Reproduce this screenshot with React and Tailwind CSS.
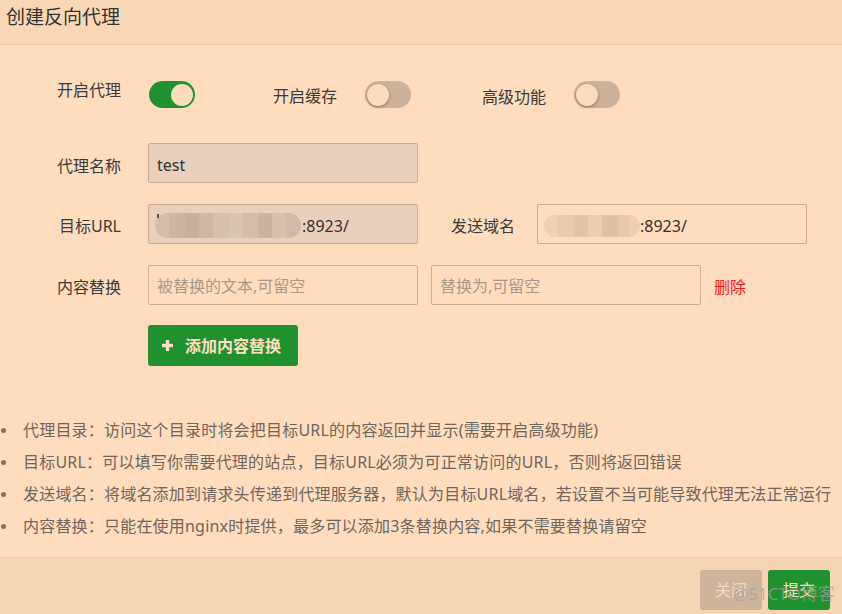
import React from "react";

function Toggle({ on }) {
  return (
    <div
      className={
        "relative w-[46px] h-[27px] rounded-full shrink-0 " +
        (on ? "bg-[#20912f]" : "bg-[#ccb29a]")
      }
    >
      <div
        className={
          "absolute top-[2.5px] w-[22px] h-[22px] rounded-full bg-[#fddcbd] " +
          (on ? "left-[22px]" : "left-[2px] shadow-[0_1px_3px_rgba(80,50,20,0.55)]")
        }
      />
    </div>
  );
}

function Blur1() {
  const blocks = [
    ["#d3bdab", 14],
    ["#cdb5a2", 16],
    ["#c9b09c", 14],
    ["#cfb7a4", 14],
    ["#d6c0ae", 16],
    ["#dac5b4", 14],
    ["#d3bcaa", 16],
    ["#ccb39f", 14],
    ["#d6c0ae", 14],
    ["#d1baa7", 15],
  ];
  return (
    <div className="relative flex h-[25px] w-[146px] rounded-full overflow-hidden blur-[0.6px]">
      {blocks.map(([c, w], i) => (
        <div key={i} style={{ background: c, width: w }} className="h-full" />
      ))}
    </div>
  );
}

function Blur2() {
  const blocks = [
    ["#efd1b5", 14],
    ["#e9caae", 16],
    ["#e4c4a7", 14],
    ["#edcdb1", 14],
    ["#e1c1a4", 16],
    ["#e8c8ac", 12],
    ["#eecfb3", 10],
  ];
  return (
    <div className="flex h-[22px] w-[96px] rounded-full overflow-hidden blur-[0.6px]">
      {blocks.map(([c, w], i) => (
        <div key={i} style={{ background: c, width: w }} className="h-full" />
      ))}
    </div>
  );
}

export default function App() {
  const tips = [
    "代理目录：访问这个目录时将会把目标URL的内容返回并显示(需要开启高级功能)",
    "目标URL：可以填写你需要代理的站点，目标URL必须为可正常访问的URL，否则将返回错误",
    "发送域名：将域名添加到请求头传递到代理服务器，默认为目标URL域名，若设置不当可能导致代理无法正常运行",
    "内容替换：只能在使用nginx时提供，最多可以添加3条替换内容,如果不需要替换请留空",
  ];
  return (
    <div className="relative w-[842px] h-[614px] overflow-hidden flex flex-col bg-[#fedcbd] font-['Noto_Sans','Noto_Sans_CJK_SC',sans-serif] text-[#333]">
      {/* header */}
      <div className="h-[45px] shrink-0 bg-[#f9d7b6] border-b border-[#ecc9a8] pl-[6px] pt-[6px]">
        <div className="text-[19px] leading-[22px] text-[#333]">创建反向代理</div>
      </div>

      {/* body */}
      <div className="flex-1 pt-[36px]">
        {/* toggles */}
        <div className="flex items-start h-[27px]">
          <div className="w-[121px] text-right text-[16px] leading-[18px] text-[#3a3a3a]">开启代理</div>
          <div className="ml-[28px]">
            <Toggle on />
          </div>
          <div className="ml-[78px] pt-[6px] text-[16px] leading-[18px] text-[#3a3a3a]">开启缓存</div>
          <div className="ml-[28px]">
            <Toggle />
          </div>
          <div className="ml-[71px] pt-[7px] text-[16px] leading-[18px] text-[#3a3a3a]">高级功能</div>
          <div className="ml-[28px]">
            <Toggle />
          </div>
        </div>

        {/* row 1 */}
        <div className="flex items-center mt-[35px] h-[40px]">
          <div className="w-[121px] pt-[5px] text-right text-[16px] leading-[20px] text-[#3a3a3a]">代理名称</div>
          <div className="ml-[27px] w-[270px] h-[40px] rounded-[2px] border border-[#c8ac95] bg-[#e8d0bc] flex items-center pt-[3px] pl-[8px] text-[16px] text-[#333]">
            test
          </div>
        </div>

        {/* row 2 */}
        <div className="flex items-center mt-[21px] h-[40px]">
          <div className="w-[121px] pt-[4px] text-right text-[16px] leading-[20px] text-[#3a3a3a]">目标URL</div>
          <div className="ml-[27px] w-[270px] h-[40px] rounded-[2px] border border-[#c8ac95] bg-[#e8d0bc] flex items-center pt-[3px] pl-[6px] text-[16px] text-[#333]">
            <div className="relative">
              <Blur1 />
              <div className="absolute left-[2px] top-[1px] w-[1.5px] h-[4px] bg-[#555]" />
            </div>
            <span className="ml-[1px]">:8923/</span>
          </div>
          <div className="ml-[33px] pt-[4px] text-[16px] leading-[20px] text-[#3a3a3a]">发送域名</div>
          <div className="ml-[22px] w-[270px] h-[40px] rounded-[2px] border border-[#c8ac95] flex items-center pt-[3px] pl-[6px] text-[16px] text-[#333]">
            <Blur2 />
            <span>:8923/</span>
          </div>
        </div>

        {/* row 3 */}
        <div className="flex items-center mt-[21px] h-[40px]">
          <div className="w-[121px] pt-[4px] text-right text-[16px] leading-[20px] text-[#3a3a3a]">内容替换</div>
          <div className="ml-[27px] w-[270px] h-[40px] rounded-[2px] border border-[#c8ac95] flex items-center pt-[2px] pl-[8px] text-[16px] text-[#a8998b]">
            被替换的文本,可留空
          </div>
          <div className="ml-[13px] w-[270px] h-[40px] rounded-[2px] border border-[#c8ac95] flex items-center pt-[2px] pl-[8px] text-[16px] text-[#a8998b]">
            替换为,可留空
          </div>
          <div className="ml-[13px] pt-[4px] text-[16px] leading-[20px] text-[#f01c1c]">删除</div>
        </div>

        {/* add button */}
        <div className="mt-[20px] ml-[148px]">
          <div className="w-[150px] h-[41px] rounded-[3px] bg-[#20912f] flex items-center pl-[14px] text-[16px] font-semibold text-[#fde0c4]">
            <svg width="11" height="11" viewBox="0 0 11 11" className="shrink-0">
              <rect x="3.8" y="0" width="3.4" height="11" fill="#fde0c4" />
              <rect x="0" y="3.8" width="11" height="3.4" fill="#fde0c4" />
            </svg>
            <span className="ml-[12px]">添加内容替换</span>
          </div>
        </div>

        {/* tips */}
        <div className="mt-[48px]">
          {tips.map((t, i) => (
            <div key={i} className="flex items-center h-[32px]">
              <div className="ml-[1px] w-[5px] h-[5px] rounded-full bg-[#7a7068] shrink-0" />
              <div className="ml-[17px] text-[16px] leading-[32px] tracking-[0.2px] text-[#6e6660] whitespace-nowrap">{t}</div>
            </div>
          ))}
        </div>
      </div>

      {/* footer */}
      <div className="h-[57px] shrink-0 bg-[#f6d5b5] border-t border-[#ecccac] flex justify-end items-start pt-[12px] pr-[12px] gap-[6px]">
        <div className="w-[62px] h-[40px] rounded-[3px] bg-[#cfb39b] flex items-center justify-center text-[16px] text-[#f2d9c1]">
          关闭
        </div>
        <div className="w-[62px] h-[40px] rounded-[3px] bg-[#20912f] flex items-center justify-center text-[16px] text-[#fde0c5]">
          提交
        </div>
      </div>

      {/* watermark */}
      <div className="absolute left-[733px] top-[582px] text-[17px] leading-[24px] text-[#a0a0a0]/70 whitespace-nowrap pointer-events-none">
        @51CTO博客
      </div>
    </div>
  );
}
